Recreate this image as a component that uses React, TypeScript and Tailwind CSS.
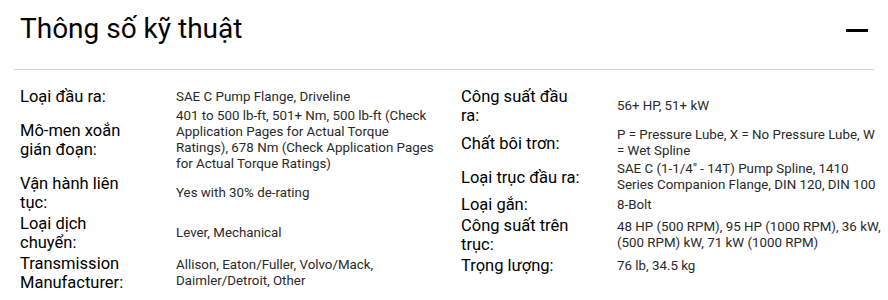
const leftSpecs = [
  { label: 'Loại đầu ra:', value: 'SAE C Pump Flange, Driveline' },
  {
    label: 'Mô-men xoắn gián đoạn:',
    value:
      '401 to 500 lb-ft, 501+ Nm, 500 lb-ft (Check Application Pages for Actual Torque Ratings), 678 Nm (Check Application Pages for Actual Torque Ratings)',
  },
  { label: 'Vận hành liên tục:', value: 'Yes with 30% de-rating' },
  { label: 'Loại dịch chuyển:', value: 'Lever, Mechanical' },
  {
    label: 'Transmission Manufacturer:',
    value: 'Allison, Eaton/Fuller, Volvo/Mack, Daimler/Detroit, Other',
  },
]

const rightSpecs = [
  { label: 'Công suất đầu ra:', value: '56+ HP, 51+ kW' },
  {
    label: 'Chất bôi trơn:',
    value: 'P = Pressure Lube, X = No Pressure Lube, W = Wet Spline',
  },
  {
    label: 'Loại trục đầu ra:',
    value: 'SAE C (1-1/4" - 14T) Pump Spline, 1410 Series Companion Flange, DIN 120, DIN 100',
  },
  { label: 'Loại gắn:', value: '8-Bolt' },
  {
    label: 'Công suất trên trục:',
    value: '48 HP (500 RPM), 95 HP (1000 RPM), 36 kW, (500 RPM) kW, 71 kW (1000 RPM)',
  },
  { label: 'Trọng lượng:', value: '76 lb, 34.5 kg' },
]

const SpecRow = ({ label, value }: { label: string; value: string }) => (
  <div className="flex items-center py-[1px]">
    {/* label column */}
    <div className="w-[156px] shrink-0">
      <p className="w-[120px] text-[16.5px] leading-[19px] text-black">{label}</p>
    </div>
    <p className="w-[265px] text-[13.33px] leading-[16px] text-[#2a2a2a]">{value}</p>
  </div>
)

export default function App() {
  return (
    <div
      className="w-[888px] h-[300px] bg-white px-[14px] overflow-hidden"
      style={{ fontFamily: 'Roboto, "Noto Sans", sans-serif' }}
    >
      {/* Header */}
      <div className="flex items-center justify-between border-b border-[#d4d4d8] h-[70px] pl-[6px] pr-[6px]">
        <h2 className="text-[28px] leading-[34px] text-black -mt-[12px]">Thông số kỹ thuật</h2>
        <div className="w-[22px] h-[3px] bg-black -mt-[9px]" />
      </div>

      {/* Specs */}
      <div className="flex gap-[20px] pl-[6px] pt-[16px]">
        <div className="flex flex-col">
          {leftSpecs.map((s) => (
            <SpecRow key={s.label} label={s.label} value={s.value} />
          ))}
        </div>
        <div className="flex flex-col">
          {rightSpecs.map((s) => (
            <SpecRow key={s.label} label={s.label} value={s.value} />
          ))}
        </div>
      </div>
    </div>
  )
}
